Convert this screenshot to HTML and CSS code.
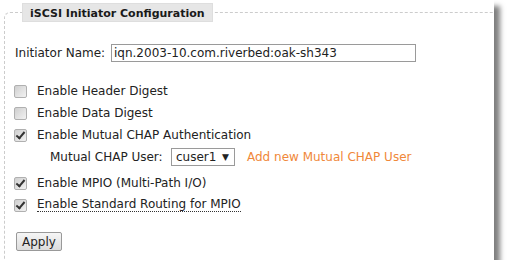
FILE: index.html
```html
<!DOCTYPE html>
<html>
  <head>
    <meta charset="UTF-8">
    <title>iSCSI Initiator Configuration</title>
    <link rel="stylesheet" href="styles.css">
  </head>
  <body>
  <div class=panel>
    <fieldset class=config>
      <legend>iSCSI Initiator Configuration</legend>

      <div class="row name-row">
        <label class=name-label for=initiator>Initiator Name:</label>
        <input class=text-input id=initiator type=text value="iqn.2003-10.com.riverbed:oak-sh343">
      </div>

      <div class="checks">
        <label class=row><input type=checkbox class=check><span>Enable Header Digest</span></label>
        <label class=row><input type=checkbox class=check><span>Enable Data Digest</span></label>
        <label class=row><input type=checkbox class=check checked><span>Enable Mutual CHAP Authentication</span></label>
        <div class="row sub-row">
          <span class=sub-label>Mutual CHAP User:</span>
          <span class=select>cuser1<span class=arrow>&#9660;</span></span>
          <a class=add-link href="#">Add new Mutual CHAP User</a>
        </div>
        <label class="row mpio"><input type=checkbox class=check checked><span>Enable MPIO (Multi-Path I/O)</span></label>
        <label class=row><input type=checkbox class=check checked><span class=dotted>Enable Standard Routing for MPIO</span></label>
      </div>

      <button class=apply type=button>Apply</button>
    </fieldset>
  </div>
  </body>
</html>
```

FILE: styles.css
```css
body {
  margin: 0;
  background-color: #ffffff;
  font-family: "DejaVu Sans", Verdana, sans-serif;
  font-size: 12px;
  color: #222222;
  }

.panel {
  width: 494px;
  height: 260px;
  overflow: hidden;
  background-color: #ffffff;
  box-shadow: 6px 6px 5px rgba(0, 0, 0, 0.5);
  }

/* the fieldset runs past the cropped panel: only top and left borders show */
.config {
  height: 300px;
  margin: 3px -60px 0 4px;
  padding: 20px 0 0 10px;
  border: 1px dashed #cccccc;
  border-right: none;
  border-bottom: none;
  border-radius: 6px 0 0 0;
  box-sizing: border-box;
  }

.config legend {
  margin-left: 7px;
  padding: 0 7px;
  height: 19px;
  line-height: 19px;
  background-color: #e6e6e6;
  border: 1px solid #dedede;
  box-sizing: border-box;
  font-weight: bold;
  font-size: 11px;
  color: #1a1a1a;
  }

.row {
  display: flex;
  align-items: center;
  height: 22px;
  }

.name-row {
  margin-bottom: 16px;
  }

.name-label {
  width: 96px;
  }

.text-input {
  width: 305px;
  height: 18px;
  margin: 0;
  padding: 0 2px;
  border: 1px solid #9a9a9a;
  box-sizing: border-box;
  font-family: "DejaVu Sans", Verdana, sans-serif;
  font-size: 12px;
  color: #222222;
  }

.check {
  appearance: none;
  -webkit-appearance: none;
  width: 13px;
  height: 13px;
  margin: 0 10px 0 -1px;
  border: 1px solid #b0b0b0;
  border-radius: 2px;
  background: linear-gradient(135deg, #cfcfcf, #f2f2f2);
  box-sizing: border-box;
  position: relative;
  }

.check:checked::after {
  content: "";
  position: absolute;
  left: 3px;
  top: 0px;
  width: 3px;
  height: 7px;
  border: solid #333333;
  border-width: 0 2px 2px 0;
  transform: rotate(40deg);
  }

.sub-row {
  padding-left: 35px;
  }

.sub-label {
  width: 121px;
  }

.select {
  display: flex;
  align-items: center;
  justify-content: space-between;
  width: 64px;
  height: 18px;
  padding: 0 5px 0 4px;
  border: 1px solid #9a9a9a;
  box-sizing: border-box;
  }

.arrow {
  font-size: 9px;
  }

.add-link {
  margin-left: 12px;
  color: #f0883a;
  text-decoration: none;
  }

.mpio {
  margin-top: 4px;
  }

.dotted {
  border-bottom: 1px dotted #333333;
  line-height: 13px;
  }

.apply {
  margin: 16px 0 0 1px;
  height: 19px;
  padding: 0 5px;
  border: 1px solid #999999;
  border-radius: 2px;
  background: linear-gradient(#f6f6f6, #dcdcdc);
  font-family: "DejaVu Sans", Verdana, sans-serif;
  font-size: 12px;
  color: #222222;
  }
```
